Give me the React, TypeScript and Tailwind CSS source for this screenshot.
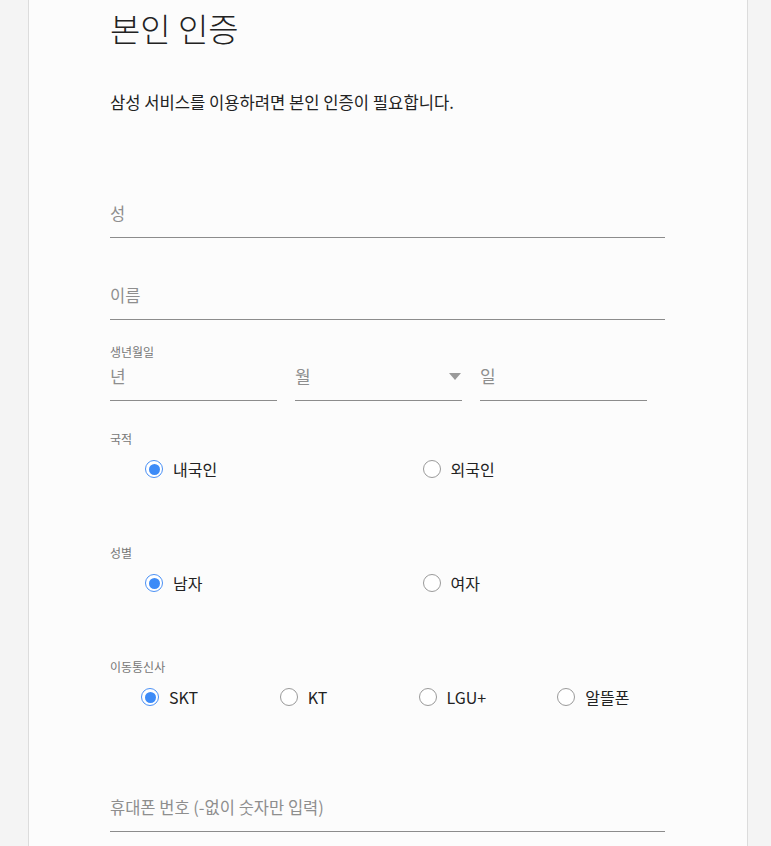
import React from 'react';

const font = { fontFamily: '"Noto Sans CJK KR", "Noto Sans", sans-serif' };

const Radio = ({ label, checked }: { label: string; checked?: boolean }) => (
  <label className="flex items-center gap-[10px] h-[24px] cursor-pointer">
    {checked ? (
      <span className="w-[18px] h-[18px] rounded-full border-[1.5px] border-[#4a90f5] flex items-center justify-center bg-white">
        <span className="w-[11px] h-[11px] rounded-full bg-[#3d8bf7]"></span>
      </span>
    ) : (
      <span className="w-[18px] h-[18px] rounded-full border border-[#9a9a9a] bg-white"></span>
    )}
    <span className="text-[16px] text-[#222]">{label}</span>
  </label>
);

const TextField = ({ placeholder, className = '' }: { placeholder: string; className?: string }) => (
  <div className={`h-[50px] border-b border-[#8c8c8c] flex items-center ${className}`}>
    <span className="text-[16.5px] text-[#8e8e8e] leading-[24px] pt-[1px]">{placeholder}</span>
  </div>
);

const App = () => {
  return (
    <div className="min-h-[846px] bg-[#f4f4f4]" style={font}>
      <div className="ml-[28px] w-[720px] min-h-[846px] bg-[#fcfcfc] border-x border-[#dcdcdc]">
        <div className="ml-[81px] w-[555px] pt-[8px] pb-[20px]">
          <h1 className="text-[33px] leading-[40px] text-[#222] font-light">본인 인증</h1>
          <p className="mt-[42px] text-[16.6px] leading-[24px] text-[#222]">
            삼성 서비스를 이용하려면 본인 인증이 필요합니다.
          </p>

          <TextField placeholder="성" className="mt-[74px]" />
          <TextField placeholder="이름" className="mt-[32px]" />

          <div className="mt-[24px]">
            <div className="text-[12px] leading-[16px] text-[#777]">생년월일</div>
            <div className="flex gap-[18px]">
              <div className="w-[167px] h-[41px] border-b border-[#8c8c8c] pt-[4px]">
                <span className="text-[17px] leading-[24px] text-[#8e8e8e]">년</span>
              </div>
              <div className="relative w-[167px] h-[41px] border-b border-[#8c8c8c] pt-[4px]">
                <span className="text-[17px] leading-[24px] text-[#8e8e8e]">월</span>
                <svg className="absolute right-[1px] top-[13px]" width="12" height="7" viewBox="0 0 12 7">
                  <path d="M0 0 H12 L6 7 Z" fill="#9a9a9a" />
                </svg>
              </div>
              <div className="w-[167px] h-[41px] border-b border-[#8c8c8c] pt-[4px]">
                <span className="text-[17px] leading-[24px] text-[#8e8e8e]">일</span>
              </div>
            </div>
          </div>

          <div className="mt-[30px]">
            <div className="text-[12px] leading-[16px] text-[#777]">국적</div>
            <div className="grid grid-cols-2 mt-[10px]">
              <div className="pl-[35px]"><Radio label="내국인" checked /></div>
              <div className="pl-[35px]"><Radio label="외국인" /></div>
            </div>
          </div>

          <div className="mt-[64px]">
            <div className="text-[12px] leading-[16px] text-[#777]">성별</div>
            <div className="grid grid-cols-2 mt-[10px]">
              <div className="pl-[35px]"><Radio label="남자" checked /></div>
              <div className="pl-[35px]"><Radio label="여자" /></div>
            </div>
          </div>

          <div className="mt-[64px]">
            <div className="text-[12px] leading-[16px] text-[#777]">이동통신사</div>
            <div className="grid grid-cols-4 mt-[10px]">
              <div className="pl-[31px]"><Radio label="SKT" checked /></div>
              <div className="pl-[31px]"><Radio label="KT" /></div>
              <div className="pl-[31px]"><Radio label="LGU+" /></div>
              <div className="pl-[31px]"><Radio label="알뜰폰" /></div>
            </div>
          </div>

          <TextField placeholder="휴대폰 번호 (-없이 숫자만 입력)" className="mt-[73px]" />
        </div>
      </div>
    </div>
  );
};

export default App;
